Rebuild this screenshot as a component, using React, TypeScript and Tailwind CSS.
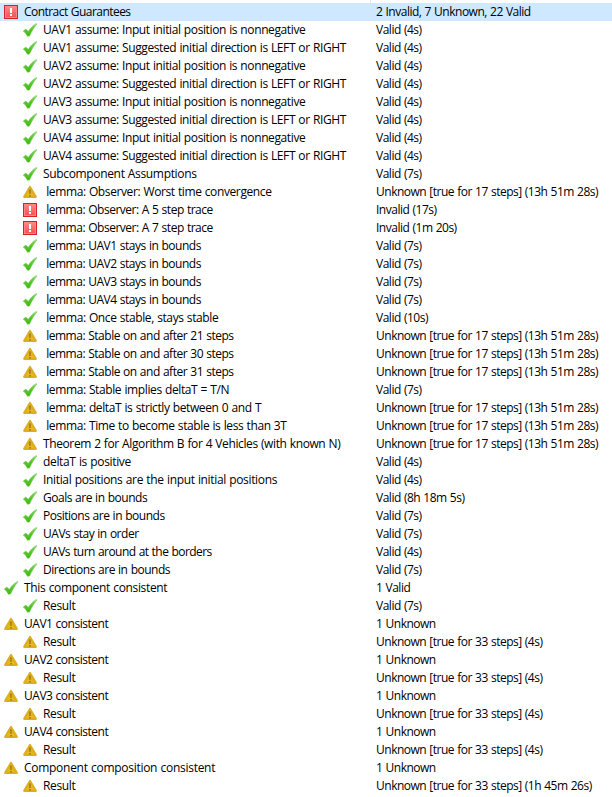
type Status = 'valid' | 'unknown' | 'invalid';
type Row = { level: 0 | 1; status: Status; name: string; result: string; tracking: string; selected?: boolean };

const LONG = 'Unknown [true for 17 steps] (13h 51m 28s)';
const SHORT = 'Unknown [true for 33 steps] (4s)';

const LOOSE = 'tracking-[-0.34px]';
const BASE = 'tracking-[-0.39px]';
const SNUG = 'tracking-[-0.48px]';
const TIGHT = 'tracking-[-0.54px]';

const child = (status: Status, name: string, result: string, tracking = BASE): Row => ({
  level: 1,
  status,
  name,
  result,
  tracking,
});
const group = (status: Status, name: string, result: string, tracking = BASE, selected = false): Row => ({
  level: 0,
  status,
  name,
  result,
  tracking,
  selected,
});

const rows: Row[] = [
  group('invalid', 'Contract Guarantees', '2 Invalid, 7 Unknown, 22 Valid', TIGHT, true),
  ...['UAV1', 'UAV2', 'UAV3', 'UAV4'].flatMap((uav) => [
    child('valid', `${uav} assume: Input initial position is nonnegative`, 'Valid (4s)'),
    child('valid', `${uav} assume: Suggested initial direction is LEFT or RIGHT`, 'Valid (4s)'),
  ]),
  child('valid', 'Subcomponent Assumptions', 'Valid (7s)', LOOSE),
  child('unknown', ' lemma: Observer: Worst time convergence', LONG),
  child('invalid', ' lemma: Observer: A 5 step trace', 'Invalid (17s)', SNUG),
  child('invalid', ' lemma: Observer: A 7 step trace', 'Invalid (1m 20s)', SNUG),
  child('valid', ' lemma: UAV1 stays in bounds', 'Valid (7s)', SNUG),
  child('valid', ' lemma: UAV2 stays in bounds', 'Valid (7s)', SNUG),
  child('valid', ' lemma: UAV3 stays in bounds', 'Valid (7s)', SNUG),
  child('valid', ' lemma: UAV4 stays in bounds', 'Valid (7s)', SNUG),
  child('valid', ' lemma: Once stable, stays stable', 'Valid (10s)'),
  child('unknown', ' lemma: Stable on and after 21 steps', LONG, SNUG),
  child('unknown', ' lemma: Stable on and after 30 steps', LONG, SNUG),
  child('unknown', ' lemma: Stable on and after 31 steps', LONG, SNUG),
  child('valid', ' lemma: Stable implies deltaT = T/N', 'Valid (7s)', BASE),
  child('unknown', ' lemma: deltaT is strictly between 0 and T', LONG),
  child('unknown', ' lemma: Time to become stable is less than 3T', LONG),
  child('unknown', 'Theorem 2 for Algorithm B for 4 Vehicles (with known N)', LONG, BASE),
  child('valid', 'deltaT is positive', 'Valid (4s)', LOOSE),
  child('valid', 'Initial positions are the input initial positions', 'Valid (4s)', LOOSE),
  child('valid', 'Goals are in bounds', 'Valid (8h 18m 5s)', SNUG),
  child('valid', 'Positions are in bounds', 'Valid (7s)', SNUG),
  child('valid', 'UAVs stay in order', 'Valid (7s)', SNUG),
  child('valid', 'UAVs turn around at the borders', 'Valid (4s)', TIGHT),
  child('valid', 'Directions are in bounds', 'Valid (7s)', SNUG),
  group('valid', 'This component consistent', '1 Valid', LOOSE),
  child('valid', 'Result', 'Valid (7s)', LOOSE),
  group('unknown', 'UAV1 consistent', '1 Unknown', SNUG),
  child('unknown', 'Result', SHORT, LOOSE),
  group('unknown', 'UAV2 consistent', '1 Unknown', SNUG),
  child('unknown', 'Result', SHORT, LOOSE),
  group('unknown', 'UAV3 consistent', '1 Unknown', SNUG),
  child('unknown', 'Result', SHORT, LOOSE),
  group('unknown', 'UAV4 consistent', '1 Unknown', SNUG),
  child('unknown', 'Result', SHORT, LOOSE),
  group('unknown', 'Component composition consistent', '1 Unknown', 'tracking-[-0.28px]'),
  child('unknown', 'Result', 'Unknown [true for 33 steps] (1h 45m 26s)', LOOSE),
];

function StatusIcon({ status }: { status: Status }) {
  if (status === 'valid') {
    return (
      <svg className="h-4 w-4 shrink-0" viewBox="0 0 16 16">
        <path
          d="M1.4 9 L3.8 7.2 L6.3 9.6 C8.4 6 11.2 3 14.6 1.4 L15 2 C12 5.2 9.6 9.2 7.5 13.8 L5.6 14.2 C4.5 12 3 10.4 1.4 9Z"
          fill="url(#tick)"
          stroke="url(#tick)"
          strokeWidth="0.7"
          strokeLinejoin="round"
        />
      </svg>
    );
  }
  if (status === 'unknown') {
    return (
      <svg className="h-4 w-4 shrink-0" viewBox="0 0 16 16">
        <path d="M8 3 L13.8 12.8 H2.2 Z" fill="url(#warn)" stroke="#dcae20" strokeWidth="2.2" strokeLinejoin="round" />
        <path d="M7.1 5.6 H8.9 L8.7 10 H7.3Z M7.1 11 H8.9 V12.6 H7.1Z" fill="#a47d18" />
      </svg>
    );
  }
  return (
    <svg className="h-4 w-4 shrink-0" viewBox="0 0 16 16">
      <rect x="1.5" y="1.5" width="13" height="13" fill="url(#alert)" stroke="#d32326" />
      <rect x="2.5" y="2.5" width="11" height="11" fill="none" stroke="#ff8585" />
      <path d="M7 4 H9 V9 H7Z M7 10 H9 V12 H7Z" fill="#fff" />
    </svg>
  );
}

function IconGradients() {
  return (
    <svg className="absolute h-0 w-0">
      <defs>
        <linearGradient id="tick" x1="0" y1="0" x2="0" y2="1">
          <stop offset="0" stopColor="#8bd578" />
          <stop offset="0.5" stopColor="#58c52f" />
          <stop offset="1" stopColor="#43b914" />
        </linearGradient>
        <linearGradient id="warn" x1="0" y1="0" x2="0" y2="1">
          <stop offset="0" stopColor="#d7ac2b" />
          <stop offset="1" stopColor="#efbd12" />
        </linearGradient>
        <linearGradient id="alert" x1="0" y1="0" x2="0" y2="1">
          <stop offset="0" stopColor="#ff8c8c" />
          <stop offset="1" stopColor="#f94b50" />
        </linearGradient>
      </defs>
    </svg>
  );
}

export default function App() {
  return (
    <div className="flex h-[797px] w-[612px] flex-col overflow-hidden bg-white font-['Open_Sans',sans-serif] text-[12px] leading-[18px] [word-spacing:0.5px] text-black">
      <IconGradients />
      <div className="flex h-[3px] shrink-0">
        <div className="w-[371px] border-r border-[#e5e5e5]" />
      </div>
      {rows.map((row, i) => (
        <div key={i} className={`flex h-[18px] shrink-0 items-center ${row.selected ? 'bg-[#cde8ff]' : ''}`}>
          <div className={`flex w-[376px] shrink-0 items-center ${row.level === 0 ? 'pl-[3px]' : 'pl-[22px]'}`}>
            <StatusIcon status={row.status} />
            <span className={`ml-[5px] whitespace-pre ${row.tracking}`}>{row.name}</span>
          </div>
          <span className="whitespace-pre tracking-[-0.49px]">{row.result}</span>
        </div>
      ))}
    </div>
  );
}
